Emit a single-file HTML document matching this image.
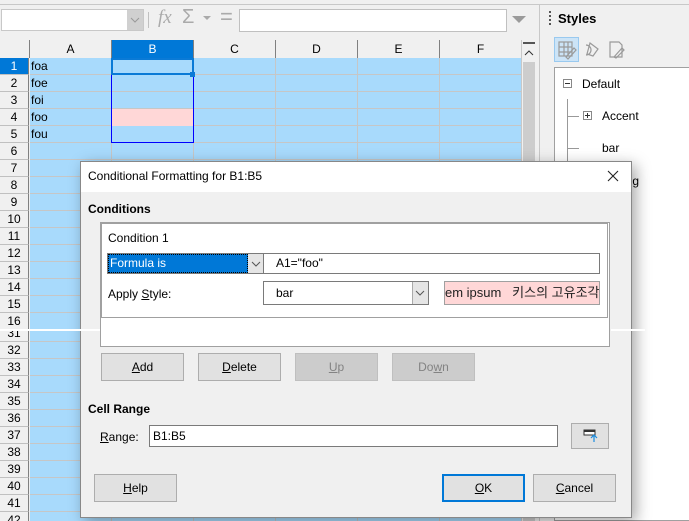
<!DOCTYPE html>
<html><head><meta charset="utf-8"><style>
*{box-sizing:border-box;margin:0;padding:0}
body{width:689px;height:521px;overflow:hidden;background:#f0f0f0;font-family:"Liberation Sans","Noto Sans CJK KR",sans-serif;font-size:12px;color:#000;position:relative}
.a{position:absolute}
.rh{position:absolute;left:0;width:29px;height:17px;border-bottom:1px solid #c0c0c0;border-right:1px solid #808080;text-align:center;line-height:17px;font-size:12px;background:#f0f0f0}
.row{position:absolute;left:30px;width:491px;height:17px;border-bottom:1px solid #c6c6c6;background:#a8dafc}
.vl{position:absolute;top:0;width:1px;height:100%;background:#c6c6c6}
.ch{position:absolute;top:40px;height:18px;text-align:center;line-height:18px;border-left:1px solid #808080;background:#f0f0f0}
.btn{position:absolute;height:28px;border:1px solid #adadad;background:#e1e1e1;text-align:center;line-height:26px;font-size:12px}
.dis{background:#cccccc;border-color:#bfbfbf;color:#838383}
.inp{position:absolute;background:#fff;border:1px solid #7a7a7a;height:22px;line-height:20px;padding-left:3px}
u{text-decoration:underline}
</style></head><body>
<div class="a" style="left:0;top:4px;width:689px;height:1px;background:#c8c8c8"></div>
<div class="a" style="left:1px;top:9px;width:143px;height:22px;background:#fff;border:1px solid #c8c8c8"></div>
<div class="a" style="left:127px;top:10px;width:16px;height:20px;background:#d0d0d0"></div>
<svg class="a" style="left:130px;top:17px" width="10" height="6"><path d="M1 1l4 4 4-4" fill="none" stroke="#999"/></svg>
<div class="a" style="left:148px;top:12px;width:1px;height:16px;background:#c0c0c0"></div>
<div class="a" style="left:158px;top:7px;font-family:'Liberation Serif',serif;font-style:italic;font-size:19px;color:#aaa">fx</div>
<div class="a" style="left:182px;top:6px;font-size:20px;color:#aaa">&Sigma;</div>
<div class="a" style="left:203px;top:16px;width:0;height:0;border-left:4px solid transparent;border-right:4px solid transparent;border-top:4px solid #aaa"></div>
<div class="a" style="left:220px;top:6px;font-size:22px;color:#aaa;line-height:22px">=</div>
<div class="a" style="left:239px;top:9px;width:268px;height:23px;background:#fff;border:1px solid #c0c0c0"></div>
<div class="a" style="left:512px;top:16px;width:0;height:0;border-left:7px solid transparent;border-right:7px solid transparent;border-top:7px solid #9a9a9a"></div>
<div class="a" style="left:0;top:40px;width:521px;height:18px;background:#f0f0f0"></div>
<div class="ch" style="left:29px;width:82px">A</div>
<div class="ch" style="left:111px;width:82px;background:#0078d7;color:#fff">B</div>
<div class="ch" style="left:193px;width:82px">C</div>
<div class="ch" style="left:275px;width:82px">D</div>
<div class="ch" style="left:357px;width:82px">E</div>
<div class="ch" style="left:439px;width:82px">F</div>
<div class="a" style="left:521px;top:40px;width:17px;height:481px;background:#f0f0f0;border-left:1px solid #c8c8c8"></div>
<div class="a" style="left:523px;top:42px;width:12px;height:2px;background:#555"></div>
<svg class="a" style="left:524px;top:50px" width="10" height="6"><path d="M1 5l4-4 4 4" fill="none" stroke="#333"/></svg>
<div class="a" style="left:523px;top:62px;width:12px;height:459px;background:#cdcdcd"></div>
<div class="a" style="left:0;top:58px;width:521px;height:273px;overflow:hidden"><div id="top"></div></div>
<div class="a" style="left:0;top:331px;width:521px;height:190px;overflow:hidden"><div id="bot"></div></div>
<script>
function build(id,start,count,y0){var h='';for(var i=0;i<count;i++){var n=start+i,y=y0+i*17;
var sel=(n==1&&start==1);
h+='<div class="rh" style="top:'+y+'px;'+(sel?'background:#0078d7;color:#fff;':'')+'">'+n+'</div>';
h+='<div class="row" style="top:'+y+'px">';
[81,163,245,327,409].forEach(function(x){h+='<div class="vl" style="left:'+x+'px"></div>'});
h+='</div>';}
document.getElementById(id).innerHTML=h;}
build('top',1,16,0);build('bot',31,13,-6);
</script>
<div class="a" style="left:31px;top:58px;line-height:17px;font-size:12px">foa<br>foe<br>foi<br>foo<br>fou</div>
<div class="a" style="left:112px;top:109px;width:81px;height:17px;background:#ffd7d7"></div>
<div class="a" style="left:111px;top:58px;width:83px;height:85px;border:1px solid #0000ff"></div>
<div class="a" style="left:111px;top:58px;width:83px;height:17px;border:2px solid #0a7ad6"></div>
<div class="a" style="left:190px;top:72px;width:5px;height:5px;background:#0a7ad6"></div>
<div class="a" style="left:539px;top:4px;width:1px;height:517px;background:#c8c8c8"></div>
<div class="a" style="left:549px;top:11px;width:2px;height:14px;border-left:2px dotted #555"></div>
<div class="a" style="left:558px;top:11px;font-weight:bold;font-size:13px">Styles</div>
<div class="a" style="left:554px;top:37px;width:25px;height:25px;background:#cce4f7;border:1px solid #99c9ef"></div>
<svg class="a" style="left:556px;top:40px" width="80" height="20" viewBox="0 0 80 20"><g fill="none" stroke="#9a9a9a" stroke-width="1.2"><rect x="3" y="2" width="13" height="14"/><path d="M3 7h13M3 12h13M8 2v14M12 2v14"/><path d="M10 17l8-9 2 2-8 9z"/><path d="M30 5a5 5 0 1 1 0 10M34 3l8 6-5 7-6-2z"/><path d="M54 2h9l3 3v12h-12z"/><path d="M58 17l8-9 2 2-8 8z"/></g></svg>
<div class="a" style="left:554px;top:67px;width:135px;height:454px;background:#fff;border:1px solid #a0a0a0;border-right:none"></div>
<div class="a" style="left:563px;top:79px;width:9px;height:9px;border:1px solid #888"></div>
<div class="a" style="left:565px;top:83px;width:5px;height:1px;background:#333"></div>
<div class="a" style="left:582px;top:77px;font-size:12px">Default</div>
<div class="a" style="left:567px;top:99px;width:1px;height:80px;background:#999"></div>
<div class="a" style="left:568px;top:116px;width:11px;height:1px;background:#999"></div>
<div class="a" style="left:568px;top:148px;width:11px;height:1px;background:#999"></div>
<div class="a" style="left:583px;top:111px;width:9px;height:9px;border:1px solid #888"></div>
<div class="a" style="left:585px;top:115px;width:5px;height:1px;background:#333"></div>
<div class="a" style="left:587px;top:113px;width:1px;height:5px;background:#333"></div>
<div class="a" style="left:602px;top:109px">Accent</div>
<div class="a" style="left:602px;top:141px">bar</div>
<div class="a" style="left:623px;top:174px">ing</div>
<div class="a" style="left:623px;top:206px">t</div>
<div class="a" style="left:623px;top:238px">s</div>
<!-- dialog -->
<div class="a" style="left:80px;top:161px;width:552px;height:357px;background:#f0f0f0;border:1px solid #888;box-shadow:4px 4px 14px rgba(0,0,0,.35)"></div>
<div class="a" style="left:81px;top:162px;width:550px;height:30px;background:#fff"></div>
<div class="a" style="left:88px;top:169px;font-size:12px">Conditional Formatting for B1:B5</div>
<svg class="a" style="left:607px;top:170px" width="12" height="12"><path d="M1 1l10 10M11 1L1 11" stroke="#222" stroke-width="1.1"/></svg>
<div class="a" style="left:88px;top:202px;font-weight:bold">Conditions</div>
<div class="a" style="left:100px;top:222px;width:510px;height:125px;background:#fff;border:1px solid #a0a0a0"></div>
<div class="a" style="left:101px;top:223px;width:507px;height:95px;border:1px solid #a0a0a0"></div>
<div class="a" style="left:108px;top:231px">Condition 1</div>
<div class="a" style="left:107px;top:253px;width:157px;height:21px;border:1px solid #7a7a7a;background:#e5e5e5"></div>
<div class="a" style="left:108px;top:254px;width:140px;height:19px;background:#0078d7;color:#fff;line-height:19px;padding-left:2px;outline:1px dotted #000;outline-offset:-1px">Formula is</div>
<svg class="a" style="left:251px;top:261px" width="10" height="6"><path d="M1 1l4 4 4-4" fill="none" stroke="#555"/></svg>
<div class="inp" style="left:263px;top:253px;width:337px;height:21px;line-height:19px;padding-left:12px">A1="foo"</div>
<div class="a" style="left:108px;top:287px">Apply <u>S</u>tyle:</div>
<div class="inp" style="left:263px;top:281px;width:166px;height:24px;line-height:22px;padding-left:12px">bar</div>
<div class="a" style="left:412px;top:282px;width:16px;height:22px;background:#e5e5e5;border-left:1px solid #aaa"></div>
<svg class="a" style="left:415px;top:290px" width="10" height="6"><path d="M1 1l4 4 4-4" fill="none" stroke="#555"/></svg>
<div class="a" style="left:444px;top:281px;width:156px;height:24px;background:#ffd7d7;border:1px solid #a0a0a0;overflow:hidden;white-space:nowrap;line-height:22px;font-size:13px;color:#222">em ipsum&nbsp;&nbsp; 키스의 고유조각</div>
<div class="a" style="left:0;top:329px;width:100px;height:2px;background:#fff"></div>
<div class="a" style="left:611px;top:329px;width:34px;height:2px;background:#fff"></div>
<div class="btn" style="left:101px;top:353px;width:83px"><u>A</u>dd</div>
<div class="btn" style="left:198px;top:353px;width:83px"><u>D</u>elete</div>
<div class="btn dis" style="left:295px;top:353px;width:83px"><u>U</u>p</div>
<div class="btn dis" style="left:392px;top:353px;width:83px">Do<u>w</u>n</div>
<div class="a" style="left:88px;top:402px;font-weight:bold">Cell Range</div>
<div class="a" style="left:100px;top:430px"><u>R</u>ange:</div>
<div class="inp" style="left:149px;top:425px;width:409px;height:22px">B1:B5</div>
<div class="btn" style="left:571px;top:423px;width:38px;height:26px"></div>
<svg class="a" style="left:583px;top:429px" width="16" height="14"><rect x="1" y="1" width="11" height="5" fill="#fff" stroke="#333"/><path d="M1 2h11" stroke="#333" stroke-width="2"/><path d="M11 13V6M8 9l3-3 3 3" fill="none" stroke="#1a8ce0" stroke-width="1.2"/></svg>
<div class="btn" style="left:94px;top:474px;width:83px"><u>H</u>elp</div>
<div class="btn" style="left:442px;top:474px;width:83px;border:2px solid #0078d7;line-height:24px"><u>O</u>K</div>
<div class="btn" style="left:533px;top:474px;width:83px"><u>C</u>ancel</div>
</body></html>
